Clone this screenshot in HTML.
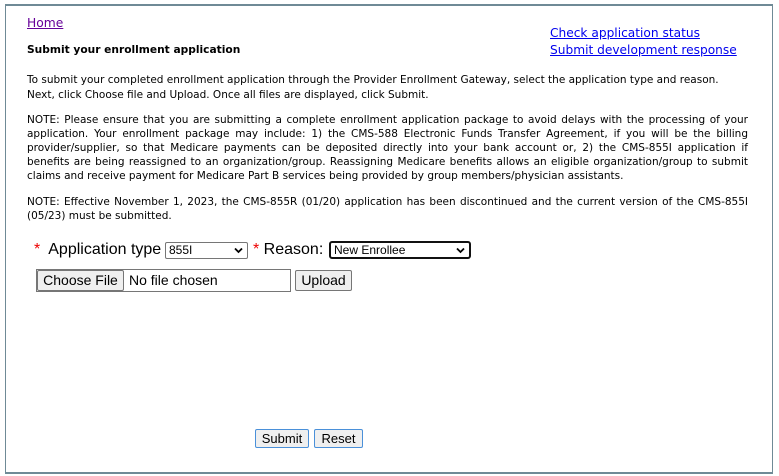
<!DOCTYPE html>
<html><head><meta charset="utf-8"><style>
html,body{margin:0;padding:0;background:#fff;width:779px;height:476px;overflow:hidden}
body{font-family:"DejaVu Sans","Liberation Sans",sans-serif;font-size:10.5px;color:#000;position:relative}
.frame{position:absolute;left:5px;top:4px;width:766px;height:466px;border:1px solid #6f8a96;border-top-width:2px;border-bottom-width:2px}
.a{position:absolute;white-space:nowrap}
a{text-decoration:underline}
.j{position:absolute;left:27px;width:721px;text-align:justify;text-align-last:justify;white-space:nowrap;line-height:14px}
.l{position:absolute;left:27px;white-space:nowrap;line-height:14px}
.big{font-family:"Liberation Sans",sans-serif;font-size:16px}
.red{color:#e00}
.sel{position:absolute;border:1px solid #767676;border-radius:2px;background:#fff;font-family:"Liberation Sans",sans-serif;font-size:12px;box-sizing:border-box;padding-left:3px;line-height:15px}
.btn{position:absolute;background:#efefef;border:1px solid #767676;border-radius:2px;box-sizing:border-box;font-family:"Liberation Sans",sans-serif;font-size:13px;text-align:center}
.chev{position:absolute;right:4px;top:4px}
</style></head><body>
<div class="frame"></div>
<a class="a" style="left:27px;top:16px;font-size:12.3px;color:#660099">Home</a>
<div class="a" style="left:27px;top:43px;font-weight:bold;font-size:10.65px">Submit your enrollment application</div>
<a class="a" style="left:550px;top:26px;font-size:12.2px;color:#0000ee">Check application status</a>
<a class="a" style="left:550px;top:43px;font-size:12.2px;color:#0000ee">Submit development response</a>

<div class="l" style="top:73px">To submit your completed enrollment application through the Provider Enrollment Gateway, select the application type and reason.</div>
<div class="l" style="top:88px">Next, click Choose file and Upload. Once all files are displayed, click Submit.</div>

<div class="j" style="top:113px">NOTE: Please ensure that you are submitting a complete enrollment application package to avoid delays with the processing of your</div>
<div class="j" style="top:127px">application. Your enrollment package may include: 1) the CMS-588 Electronic Funds Transfer Agreement, if you will be the billing</div>
<div class="j" style="top:141px">provider/supplier, so that Medicare payments can be deposited directly into your bank account or, 2) the CMS-855I application if</div>
<div class="j" style="top:155px">benefits are being reassigned to an organization/group. Reassigning Medicare benefits allows an eligible organization/group to submit</div>
<div class="l" style="top:169px">claims and receive payment for Medicare Part B services being provided by group members/physician assistants.</div>

<div class="j" style="top:195px">NOTE: Effective November 1, 2023, the CMS-855R (01/20) application has been discontinued and the current version of the CMS-855I</div>
<div class="l" style="top:209px">(05/23) must be submitted.</div>

<div class="a big" style="left:34px;top:241px"><span class="red">*</span>&nbsp; Application type</div>
<div class="sel" style="left:165px;top:242px;width:83px;height:17px">855I<svg class="chev" width="9" height="7" viewBox="0 0 9 7"><path d="M1 1.5 L4.5 5 L8 1.5" stroke="#000" stroke-width="1.8" fill="none"/></svg></div>
<div class="a big" style="left:253px;top:241px"><span class="red">*</span> Reason:</div>
<div class="sel" style="left:329px;top:241px;width:142px;height:18px;border:2px solid #111;border-radius:3px">New Enrollee<svg class="chev" width="9" height="7" viewBox="0 0 9 7"><path d="M1 1.5 L4.5 5 L8 1.5" stroke="#000" stroke-width="1.8" fill="none"/></svg></div>

<div class="a" style="left:36px;top:269px;width:255px;height:23px;border:1px solid #767676;box-sizing:border-box"></div>
<div class="btn" style="left:37px;top:270px;width:87px;height:21px;line-height:19px;font-size:14px">Choose File</div>
<div class="a" style="left:129px;top:272px;font-family:'Liberation Sans',sans-serif;font-size:14px">No file chosen</div>
<div class="btn" style="left:295px;top:270px;width:57px;height:21px;line-height:19px;font-size:14px">Upload</div>

<div class="btn" style="left:255px;top:429px;width:54px;height:19px;line-height:17px;border-color:#4a90d9">Submit</div>
<div class="btn" style="left:314px;top:429px;width:49px;height:19px;line-height:17px;border-color:#4a90d9">Reset</div>
</body></html>
